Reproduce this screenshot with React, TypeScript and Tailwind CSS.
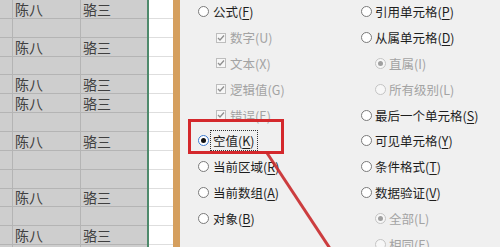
import React from 'react'

const rows = [
  { h: 'h-[19px]', text: true },
  { h: 'h-[19px]', text: false },
  { h: 'h-[19px]', text: true },
  { h: 'h-[18px]', text: false },
  { h: 'h-[19px]', text: true },
  { h: 'h-[19px]', text: true },
  { h: 'h-[19px]', text: false },
  { h: 'h-[19px]', text: true },
  { h: 'h-[19px]', text: false },
  { h: 'h-[19px]', text: false },
  { h: 'h-[18px]', text: true },
  { h: 'h-[19px]', text: false },
  { h: 'h-[19px]', text: true },
  { h: 'h-[19px]', text: false },
]

const cjk = { fontFamily: '"Noto Sans CJK SC", "Noto Sans", sans-serif' }

type Item = {
  kind: 'radio' | 'check'
  label: string
  key: string
  indent?: boolean
  disabled?: boolean
  selected?: boolean
  focus?: boolean
}

const left: Item[] = [
  { kind: 'radio', label: '公式', key: 'F' },
  { kind: 'check', label: '数字', key: 'U', indent: true, disabled: true, selected: true },
  { kind: 'check', label: '文本', key: 'X', indent: true, disabled: true, selected: true },
  { kind: 'check', label: '逻辑值', key: 'G', indent: true, disabled: true, selected: true },
  { kind: 'check', label: '错误', key: 'E', indent: true, disabled: true, selected: true },
  { kind: 'radio', label: '空值', key: 'K', selected: true, focus: true },
  { kind: 'radio', label: '当前区域', key: 'R' },
  { kind: 'radio', label: '当前数组', key: 'A' },
  { kind: 'radio', label: '对象', key: 'B' },
]

const right: Item[] = [
  { kind: 'radio', label: '引用单元格', key: 'P' },
  { kind: 'radio', label: '从属单元格', key: 'D' },
  { kind: 'radio', label: '直属', key: 'I', indent: true, disabled: true, selected: true },
  { kind: 'radio', label: '所有级别', key: 'L', indent: true, disabled: true },
  { kind: 'radio', label: '最后一个单元格', key: 'S' },
  { kind: 'radio', label: '可见单元格', key: 'Y' },
  { kind: 'radio', label: '条件格式', key: 'T' },
  { kind: 'radio', label: '数据验证', key: 'V' },
  { kind: 'radio', label: '全部', key: 'L', indent: true, disabled: true, selected: true },
  { kind: 'radio', label: '相同', key: 'E', indent: true, disabled: true },
]

function Radio({ selected, disabled }: { selected?: boolean; disabled?: boolean }) {
  return (
    <span className={`w-[11px] h-[11px] shrink-0 rounded-full border flex items-center justify-center ${disabled ? 'border-[#c4c4c4] bg-[#f7f7f7]' : selected ? 'border-[#3d7bd0] bg-white' : 'border-[#7a7a7a] bg-white'}`}>
      {selected && <span className={`w-[5px] h-[5px] rounded-full ${disabled ? 'bg-[#a0a0a0]' : 'bg-[#111]'}`} />}
    </span>
  )
}

function Check() {
  return (
    <span className="w-[10px] h-[10px] shrink-0 border border-[#bdbdbd] bg-[#f7f7f7] flex items-center justify-center">
      <svg width="8" height="8" viewBox="0 0 8 8"><polyline points="1,4 3,6 7,1.5" fill="none" stroke="#8f8f8f" strokeWidth="1.3" /></svg>
    </span>
  )
}

function Option({ it, gap }: { it: Item; gap: string }) {
  return (
    <div className={`h-[25.8px] flex items-center ${gap} ${it.indent ? (it.kind === 'check' ? 'pl-[18px]' : 'pl-[14px]') : ''}`}>
      {it.kind === 'radio' ? <Radio selected={it.selected} disabled={it.disabled} /> : <Check />}
      <span className={`text-[12.5px] leading-[17px] whitespace-nowrap px-[1px] ${it.disabled ? 'text-[#a3a3a3]' : 'text-[#1e1e1e]'} ${it.focus ? 'outline outline-1 outline-dotted outline-[#333] outline-offset-[1px]' : ''}`} style={cjk}>
        {it.label}(<span className={it.disabled ? '' : 'underline underline-offset-2'}>{it.key}</span>)
      </span>
    </div>
  )
}

export default function App() {
  return (
    <div className="relative w-[500px] h-[247px] overflow-hidden flex bg-[#f0f0f0]">
      {/* sheet */}
      <div className="w-[147px] shrink-0 bg-[#cecece]">
        {rows.map((r, i) => (
          <div key={i} className={`${r.h} flex border-b border-[#b4b4b4]`}>
            <div className="w-[13px] border-r border-[#b4b4b4]" />
            <div className="w-[68px] border-r border-[#b4b4b4] flex items-end pl-[2px] text-[14px] leading-[17px] text-[#404040]" style={cjk}>{r.text ? '陈八' : ''}</div>
            <div className="flex-1 flex items-end pl-[2px] text-[14px] leading-[17px] text-[#404040]" style={cjk}>{r.text ? '骆三' : ''}</div>
          </div>
        ))}
      </div>
      <div className="w-[2px] shrink-0 bg-[#4f8a6c]" />
      <div className="w-[24px] shrink-0 bg-white">
        {rows.map((r, i) => (
          <div key={i} className={`${r.h} border-b border-[#dedede]`} />
        ))}
      </div>
      <div className="w-[7px] shrink-0 bg-[#d59f5e]" />

      {/* dialog */}
      <div className="flex-1 flex -mt-[1px]">
        <div className="w-[181px] pl-[18px]">
          {left.map((it, i) => <Option key={i} it={it} gap="gap-[3px]" />)}
        </div>
        <div className="flex-1">
          {right.map((it, i) => <Option key={i} it={it} gap="gap-[2px]" />)}
        </div>
      </div>

      {/* annotation */}
      <div className="absolute left-[188px] top-[119px] w-[96px] h-[35px] border-[3px] border-[#d4282c]" />
      <svg className="absolute left-0 top-0" width="500" height="247">
        <line x1="267" y1="153" x2="331" y2="250" stroke="#c92a2c" strokeWidth="3" opacity="0.9" />
      </svg>
    </div>
  )
}
